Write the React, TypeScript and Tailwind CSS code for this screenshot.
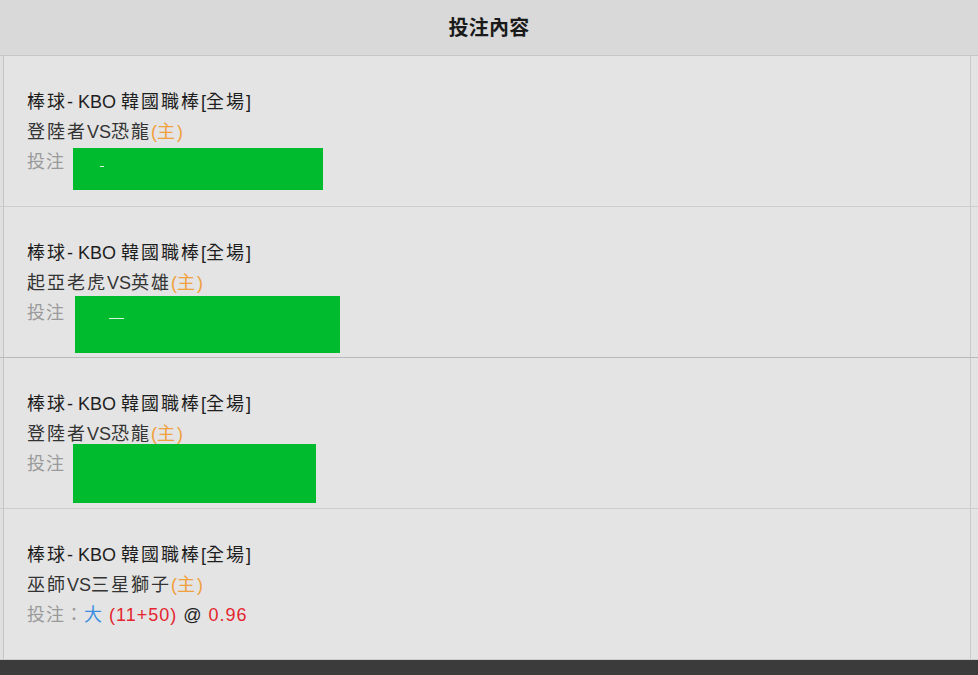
import React from "react";

const font = { fontFamily: '"Liberation Sans", "Noto Sans CJK TC", sans-serif' };

type Row = {
  teams: string;
  box?: { w: string; h: string; mt: string; ml: string; dash: string };
  last?: boolean;
};

function Cjk({ text }: { text: string }) {
  const parts = text.split(/([\u3000-\u9fff\uff00-\uffef]+)/).filter((p) => p.length > 0);
  return (
    <>
      {parts.map((p, i) =>
        /[\u3000-\u9fff\uff00-\uffef]/.test(p) ? (
          <span key={i} className="tracking-[2px]">
            {p}
          </span>
        ) : (
          <span key={i}>{p}</span>
        )
      )}
    </>
  );
}

function Line3({ row }: { row: Row }) {
  if (row.last) {
    return (
      <div className="h-[30px] leading-[30px] whitespace-nowrap tracking-[1px]">
        <span className="text-[#9a9a9a]">投注：</span>
        <span className="text-[#3a8de0]">大</span>{" "}
        <span className="text-[#e3262f]">(11+50)</span>{" "}
        <span className="text-[#222]">@</span>{" "}
        <span className="text-[#e3262f]">0.96</span>
      </div>
    );
  }
  const b = row.box!;
  return (
    <div className="h-[30px] leading-[30px] flex items-start whitespace-nowrap tracking-[1px]">
      <span className="text-[#9a9a9a]">投注</span>
      <div className={`${b.w} ${b.h} ${b.mt} ${b.ml} bg-[#00bb2d] shrink-0 flex`}>
        <div className={b.dash} />
      </div>
    </div>
  );
}

export default function App() {
  const rows: Row[] = [
    {
      teams: "登陸者VS恐龍",
      box: { w: "w-[250px]", h: "h-[42px]", mt: "mt-[1px]", ml: "ml-[8px]", dash: "ml-[27px] mt-[18px] w-[4px] h-[1px] bg-[#d9f5df]" },
    },
    {
      teams: "起亞老虎VS英雄",
      box: { w: "w-[265px]", h: "h-[57px]", mt: "-mt-[2px]", ml: "ml-[10px]", dash: "ml-[34px] mt-[22px] w-[15px] h-[1px] bg-[#d9f5df]" },
    },
    {
      teams: "登陸者VS恐龍",
      box: { w: "w-[243px]", h: "h-[59px]", mt: "-mt-[5px]", ml: "ml-[8px]", dash: "" },
    },
    { teams: "巫師VS三星獅子", last: true },
  ];

  return (
    <div className="w-[978px] h-[675px] bg-[#e4e4e4] flex flex-col overflow-hidden" style={font}>
      <div className="h-[56px] shrink-0 bg-[#d9d9d9] border-b border-[#c6c6c6] flex items-center justify-center">
        <span className="text-[20px] font-bold text-[#1a1a1a] tracking-[0.3px]">投注內容</span>
      </div>
      {rows.map((r, i) => (
        <div
          key={i}
          className={`h-[151px] shrink-0 flex border-b ${i === 1 ? "border-[#b9b9b9]" : "border-[#cdcdcd]"}`}
        >
          <div className="w-[4px] shrink-0 border-r border-[#c4c4c4] bg-[#e0e0e0]" />
          <div className="flex-1 pl-[23px] pt-[31px] text-[18px] text-[#2a2a2a]">
            <div className="h-[30px] leading-[30px] whitespace-nowrap text-[#1e1e1e]">
              <Cjk text="棒球- KBO 韓國職棒[全場]" />
            </div>
            <div className="h-[30px] leading-[30px] whitespace-nowrap text-[#333]">
              <Cjk text={r.teams} />
              <span className="text-[#f0a03c]">
                (<span className="tracking-[2px]">主</span>)
              </span>
            </div>
            <Line3 row={r} />
          </div>
          <div className="w-[8px] shrink-0 border-l border-[#c9c9c9]" />
        </div>
      ))}
      <div className="flex-1 bg-[#3b3b3b]" />
    </div>
  );
}
